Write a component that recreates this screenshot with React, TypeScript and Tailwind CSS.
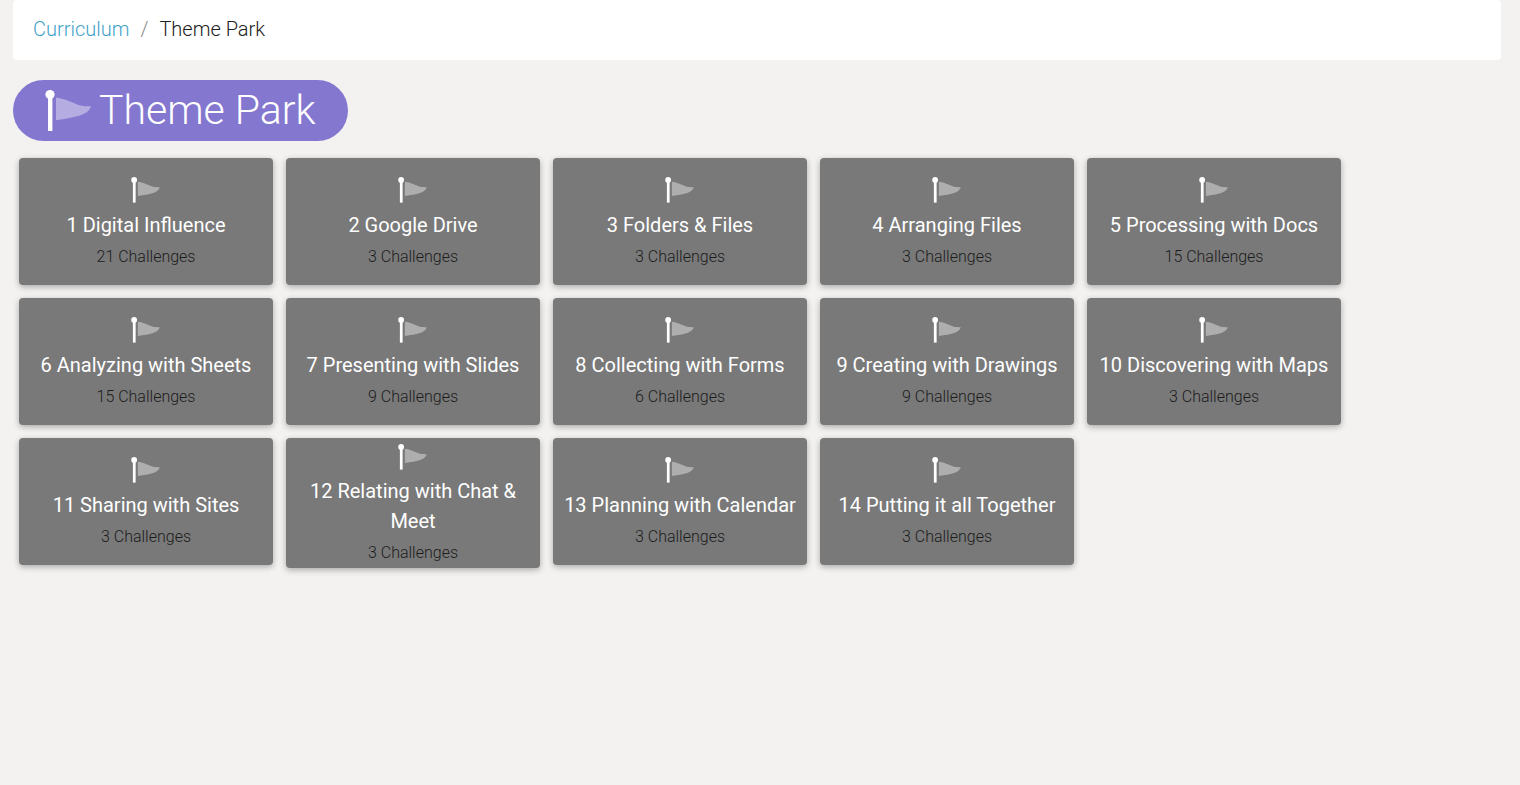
type Unit = {
  title: string;
  challenges: number;
};

const units: Unit[] = [
  { title: "1 Digital Influence", challenges: 21 },
  { title: "2 Google Drive", challenges: 3 },
  { title: "3 Folders & Files", challenges: 3 },
  { title: "4 Arranging Files", challenges: 3 },
  { title: "5 Processing with Docs", challenges: 15 },
  { title: "6 Analyzing with Sheets", challenges: 15 },
  { title: "7 Presenting with Slides", challenges: 9 },
  { title: "8 Collecting with Forms", challenges: 6 },
  { title: "9 Creating with Drawings", challenges: 9 },
  { title: "10 Discovering with Maps", challenges: 3 },
  { title: "11 Sharing with Sites", challenges: 3 },
  { title: "12 Relating with Chat & Meet", challenges: 3 },
  { title: "13 Planning with Calendar", challenges: 3 },
  { title: "14 Putting it all Together", challenges: 3 },
];

function Pennant({ className }: { className?: string }) {
  return (
    <svg viewBox="0 0 48 42" fill="currentColor" className={className} aria-hidden="true">
      <circle cx="5" cy="4.6" r="4.6" />
      <path d="M3 5h4.4v36H3z" />
      <path opacity="0.4" d="M11 7.5C18 8.3 24 11 31 14C36 16.3 41 16.4 46 16.2C45.5 19 43 21.6 39 23.8C33 27 25 28 11 30.2Z" />
    </svg>
  );
}

function UnitCard({ unit }: { unit: Unit }) {
  return (
    <a
      href="#"
      className="flex w-[254px] min-h-[127px] flex-col items-center justify-center rounded bg-[#797979] px-2 text-center shadow-[0_2px_6px_rgba(0,0,0,0.3)]"
    >
      <div className="flex h-[38px] items-center">
        <Pennant className="w-[30px] text-white" />
      </div>
      <h2 className="text-[20px] leading-[30px] text-white">{unit.title}</h2>
      <p className="mt-0.5 text-[16px] leading-[30px] font-light text-[#1c1c1c]">{unit.challenges} Challenges</p>
    </a>
  );
}

export default function App() {
  return (
    <div className="min-h-screen bg-[#f3f2f0] pr-[19px] pl-[13px] font-[Roboto,sans-serif]">
      <nav aria-label="Breadcrumb" className="rounded bg-white px-5 pt-3.5 pb-4">
        <ol className="flex gap-[11px] text-[20px] leading-[30px] font-light">
          <li>
            <a href="#" className="text-[#3fa2c8]">Curriculum</a>
          </li>
          <li aria-hidden="true" className="text-[#8a8a8a]">/</li>
          <li className="text-[#212121]">Theme Park</li>
        </ol>
      </nav>

      <h1 className="mt-5 flex w-fit items-center gap-1.5 rounded-full bg-[#8477cf] px-8 text-[41px] leading-[61px] font-light text-white">
        <Pennant className="w-12" />
        Theme Park
      </h1>

      <div className="mt-[17px] flex flex-wrap items-start gap-[13px] px-1.5">
        {units.map((unit) => (
          <UnitCard key={unit.title} unit={unit} />
        ))}
      </div>
    </div>
  );
}
